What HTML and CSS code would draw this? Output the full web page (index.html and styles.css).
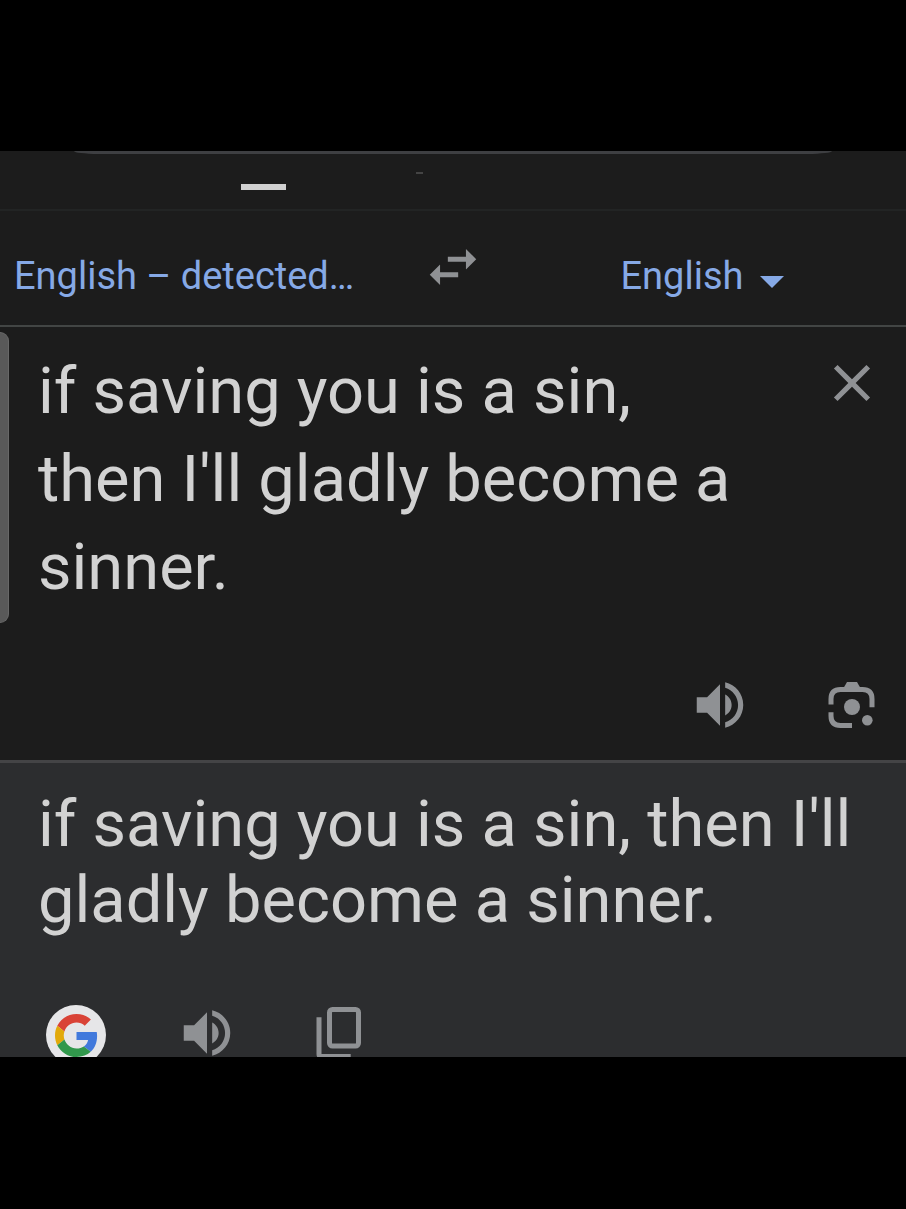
FILE: index.html
```html
<!DOCTYPE html>
<html lang="en">
<head>
    <meta charset="UTF-8">
    <meta name="viewport" content="width=device-width,initial-scale=1">
    <title>Translate</title>
    <link rel="stylesheet" href="styles.css">
</head>
<body>
    <svg width="0" height="0" class="sprite" aria-hidden="true">
        <symbol id="icon-volume" viewBox="0 0 24 24">
            <path d="M3 9v6h4l5 5V4L7 9H3zM16.500 12c0-1.770-1.020-3.290-2.500-4.030v8.050c1.480-.730 2.500-2.250 2.500-4.020zM14 3.230v2.060c2.890.860 5 3.540 5 6.710s-2.110 5.850-5 6.710v2.060c4.010-.910 7-4.490 7-8.770s-2.990-7.860-7-8.770z"/>
        </symbol>
    </svg>

    <main class="translate">
        <div class="search-edge"></div>
        <div class="tabs">
            <span class="tab-active"></span>
            <span class="tab-mark"></span>
        </div>

        <div class="languages">
            <select class="lang-select" aria-label="Source language">
                <option>English – detected…</option>
            </select>
            <button class="icon-btn swap" aria-label="Swap languages">
                <svg class="icon" viewBox="0 0 24 24">
                    <path d="M6.990 11L3 15l3.990 4v-3H14v-2H6.990v-3zM21 9l-3.990-4v3H10v2h7.010v3L21 9z"/>
                </svg>
            </button>
            <div class="target">
                <select class="lang-select" aria-label="Target language">
                    <option>English</option>
                </select>
                <svg class="caret" viewBox="0 0 24 12"><path d="M0 0h24L12 12z"/></svg>
            </div>
        </div>

        <section class="source">
            <div class="handle"></div>
            <div class="source-row">
                <textarea class="source-text" rows="3" aria-label="Source text" spellcheck="false">if saving you is a sin, then I'll gladly become a sinner.</textarea>
                <button class="icon-btn clear" aria-label="Clear">
                    <svg class="icon" viewBox="0 0 24 24">
                        <path d="M19 6.410L17.590 5 12 10.590 6.410 5 5 6.410 10.590 12 5 17.590 6.410 19 12 13.410 17.590 19 19 17.590 13.410 12z"/>
                    </svg>
                </button>
            </div>
            <div class="source-actions">
                <button class="icon-btn" aria-label="Listen to source">
                    <svg class="icon"><use href="#icon-volume"/></svg>
                </button>
                <button class="icon-btn" aria-label="Translate with camera">
                    <svg class="icon" viewBox="0 0 62 62">
                        <path class="stroke" d="M10 30.500V25q0-9.500 9.500-9.500h22q9.500 0 9.500 9.500v8.200M10 38.200V42q0 9.500 9.500 9.500H31"/>
                        <path d="M22 15l4-7h10l4 7z"/>
                        <circle cx="31" cy="33" r="8"/>
                        <circle cx="46.300" cy="46.300" r="5.300"/>
                    </svg>
                </button>
            </div>
        </section>

        <section class="result">
            <p class="result-text">if saving you is a sin, then I'll gladly become a sinner.</p>
            <div class="result-actions">
                <a class="logo" href="#" aria-label="Google">
                    <svg viewBox="0 0 48 48">
                        <path fill="#d94236" d="M24 9.500c3.540 0 6.710 1.220 9.210 3.600l6.850-6.850C35.900 2.380 30.470 0 24 0 14.620 0 6.510 5.380 2.560 13.220l7.980 6.190C12.430 13.720 17.740 9.500 24 9.500z"/>
                        <path fill="#4179dc" d="M46.980 24.550c0-1.570-.150-3.090-.380-4.550H24v9.020h12.940c-.580 2.960-2.260 5.480-4.780 7.180l7.730 6c4.510-4.180 7.090-10.360 7.090-17.650z"/>
                        <path fill="#e2a90a" d="M10.530 28.590c-.480-1.450-.760-2.990-.760-4.590s.270-3.140.760-4.590l-7.980-6.190C.920 16.460 0 20.120 0 24c0 3.880.920 7.540 2.560 10.780l7.970-6.190z"/>
                        <path fill="#31984c" d="M24 48c6.480 0 11.930-2.130 15.890-5.810l-7.730-6c-2.150 1.450-4.920 2.300-8.160 2.300-6.260 0-11.570-4.220-13.470-9.910l-7.980 6.190C6.510 42.620 14.620 48 24 48z"/>
                    </svg>
                </a>
                <button class="icon-btn" aria-label="Listen to translation">
                    <svg class="icon"><use href="#icon-volume"/></svg>
                </button>
                <button class="icon-btn" aria-label="Copy translation">
                    <svg class="icon" viewBox="0 0 62 62">
                        <rect class="stroke" x="21.500" y="7.500" width="29" height="36.500" rx="3"/>
                        <path class="stroke" d="M11 15.300V52q0 2.500 2.500 2.500h29.200"/>
                    </svg>
                </button>
            </div>
        </section>
    </main>
</body>
</html>
```

FILE: styles.css
```css
* {
    margin: 0;
    padding: 0;
    box-sizing: border-box;
}

body {
    min-height: 100vh;
    display: flex;
    flex-direction: column;
    justify-content: center;
    padding-bottom: 1px;
    background-color: #000;
    color: #d2d2d2;
    font-family: Roboto, sans-serif;
}

.sprite {
    position: absolute;
}

.translate {
    width: 100%;
    background-color: #1c1c1c;
}

.search-edge {
    height: 3px;
    margin: 0 74px;
    background-color: #3e3f42;
    border-radius: 0 0 24px 24px / 0 0 3px 3px;
}

.tabs {
    display: flex;
    align-items: flex-start;
    gap: 130px;
    height: 57px;
    padding: 18px 0 0 241px;
    border-bottom: 2px solid #222424;
}

.tab-active {
    width: 45px;
    height: 6px;
    margin-top: 12px;
    background-color: #d0d0d0;
}

.tab-mark {
    width: 7px;
    height: 2px;
    background-color: #444;
}

.languages {
    display: grid;
    grid-template-columns: 1fr auto 1fr;
    align-items: center;
    height: 116px;
    padding-top: 16px;
    border-bottom: 2px solid #424544;
}

.lang-select {
    appearance: none;
    border: none;
    background: none;
    color: #86a9e6;
    font-family: inherit;
    font-size: 38px;
    line-height: 48px;
}

.languages > .lang-select {
    margin-left: 14px;
}

.target {
    display: flex;
    justify-content: center;
    align-items: center;
    gap: 16px;
    padding-left: 14px;
}

.caret {
    width: 24px;
    height: 12px;
    margin-top: 12px;
    fill: #86a9e6;
}

.icon-btn {
    display: block;
    flex: none;
    border: none;
    background: none;
    cursor: pointer;
}

.swap {
    padding-bottom: 18px;
}

.icon {
    display: block;
    width: 62px;
    height: 62px;
    fill: #8f9194;
}

.stroke {
    fill: none;
    stroke: #8f9194;
    stroke-width: 5;
}

.source {
    position: relative;
    padding: 20px 23px 24px 38px;
    border-bottom: 3px solid #444446;
}

.handle {
    position: absolute;
    top: 5px;
    left: 0;
    width: 9px;
    height: 291px;
    background-color: #595959;
    border: 1px solid #686868;
    border-left: none;
    border-radius: 0 9px 9px 0;
}

.source-row {
    display: flex;
    align-items: flex-start;
    gap: 48px;
}

.clear {
    margin-top: 5px;
}

.source-text {
    flex: 1;
    min-width: 0;
    border: none;
    outline: none;
    resize: none;
    overflow: hidden;
    background: none;
    color: inherit;
    font-family: inherit;
    font-size: 65px;
    line-height: 88px;
}

.source-actions {
    display: flex;
    justify-content: flex-end;
    gap: 70px;
    margin-top: 63px;
}

.result {
    padding: 23px 23px 0 38px;
    background-color: #2c2d2f;
}

.result-text {
    font-size: 65px;
    line-height: 76px;
}

.result-actions {
    display: flex;
    gap: 70px;
    height: 55px;
    margin-top: 64px;
    padding-left: 8px;
    overflow: hidden;
}

.logo {
    display: flex;
    flex: none;
    align-items: center;
    justify-content: center;
    width: 60px;
    height: 60px;
    margin-top: 3px;
    border-radius: 50%;
    background-color: #e6e6e8;
}

.logo svg {
    width: 43px;
    height: 43px;
}
```
